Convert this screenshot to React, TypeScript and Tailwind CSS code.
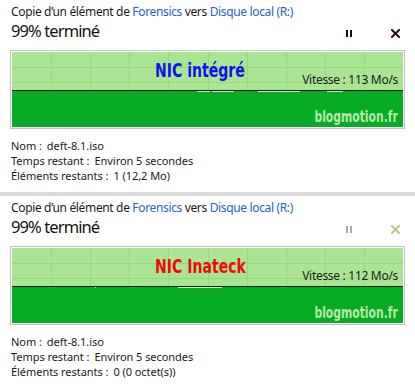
import React from "react";

const FONT = { fontFamily: '"Segoe UI", "Noto Sans", "Open Sans", sans-serif' };
const NARROW = {
  fontFamily: '"DejaVu Sans", "Liberation Sans", sans-serif',
};

type P = {
  label: string;
  labelColor: string;
  speed: string;
  remaining: string;
  active: boolean;
  ticks: [number, number][];
};

function Graph({ label, labelColor, speed, ticks }: P) {
  const vlines = [1, 2, 3, 4, 5, 6, 7, 8, 9];
  return (
    <div className="mx-[10px] w-[395px] h-[79px] border border-[#c4c4c4] p-px bg-white">
      <div className="flex flex-col w-full h-full">
        <div className="relative flex h-[38px] bg-[#abe594]">
          {vlines.map((i) => (
            <div
              key={i}
              className="absolute top-0 bottom-0 w-px bg-[#92dc7d]"
              style={{ left: `${i * 10}%` }}
            />
          ))}
          <div className="absolute left-0 right-0 top-[15px] h-px bg-[#92dc7d]" />
          <div className="absolute left-0 right-0 top-[30px] h-px bg-[#92dc7d]" />
          <div className="relative pl-[143px] pt-[7px]">
            <div
              className="origin-left scale-x-[0.74] text-[19px] font-bold leading-[22px] whitespace-nowrap"
              style={{ ...NARROW, color: labelColor }}
            >
              {label}
            </div>
          </div>
          <div
            className="relative ml-auto self-end pr-[5px] pb-[2px] text-[12px] leading-[16px] text-[#1b1b1b] tracking-[-0.3px]"
            style={FONT}
          >
            {speed}
          </div>
        </div>
        <div className="h-px bg-[#1a1a1a]" />
        <div className="relative flex flex-1 items-end justify-end bg-[#05ac24] pr-[5px] pb-[1px]">
          {ticks.map(([x, w], i) => (
            <div
              key={i}
              className="absolute top-0 h-px bg-[#c9ecbf]"
              style={{ left: x, width: w }}
            />
          ))}
          <div
            className="origin-right scale-x-[0.72] text-[15px] font-bold leading-[18px] text-[#b8e8aa] whitespace-nowrap"
            style={NARROW}
          >
            blogmotion.fr
          </div>
        </div>
      </div>
    </div>
  );
}

function Panel(p: P) {
  const pauseColor = p.active ? "bg-[#1d0a1c]" : "bg-[#a8a8a8]";
  return (
    <div className="flex flex-col h-[191px] bg-white" style={FONT}>
      <div className="pl-[11px] pt-[4px] text-[12px] leading-[16px] text-[#1a1a1a] tracking-[-0.35px]">
        Copie d’un élément de <span className="text-[#2463c8]">Forensics</span> vers{" "}
        <span className="text-[#2463c8]">Disque local (R:)</span>
      </div>
      <div className="flex items-start h-[30px] pl-[11px] pr-[15px]">
        <div className="text-[16.5px] leading-[22px] text-[#111] tracking-[-0.9px]">99% terminé</div>
        <div className="ml-auto mt-[9px] flex items-center">
          <div className="flex gap-[2px] mr-[39px]">
            <div className={`w-[2px] h-[7px] ${pauseColor}`} />
            <div className={`w-[2px] h-[7px] ${pauseColor}`} />
          </div>
          <svg width="9" height="9" viewBox="0 0 9 9">
            <path
              d="M1 1 L8 8 M8 1 L1 8"
              stroke={p.active ? "#2a0e0e" : "#b4c98a"}
              strokeWidth="2"
              strokeLinecap="square"
            />
          </svg>
        </div>
      </div>
      <Graph {...p} />
      <div className="flex flex-col pl-[11px] pt-[9px] text-[11px] leading-[15px] text-[#1a1a1a] tracking-[-0.05px]">
        <div className="flex gap-[5px]">
          <span>Nom :</span>
          <span>deft-8.1.iso</span>
        </div>
        <div className="flex gap-[5px]">
          <span>Temps restant :</span>
          <span>Environ 5 secondes</span>
        </div>
        <div className="flex gap-[5px]">
          <span>Éléments restants :</span>
          <span>{p.remaining}</span>
        </div>
      </div>
    </div>
  );
}

export default function App() {
  return (
    <div className="flex flex-col w-[415px] h-[388px] bg-white overflow-hidden">
      <Panel
        label="NIC intégré"
        labelColor="#1010f0"
        speed="Vitesse : 113 Mo/s"
        remaining="1 (12,2 Mo)"
        active={true}
        ticks={[
          [185, 13],
          [200, 22],
          [246, 42],
          [315, 16],
        ]}
      />
      <div className="h-[4px] mt-px bg-[#dadada]" />
      <Panel
        label="NIC Inateck"
        labelColor="#f00a0a"
        speed="Vitesse : 112 Mo/s"
        remaining="0 (0 octet(s))"
        active={false}
        ticks={[
          [83, 1],
          [166, 38],
          [204, 6],
        ]}
      />
    </div>
  );
}
